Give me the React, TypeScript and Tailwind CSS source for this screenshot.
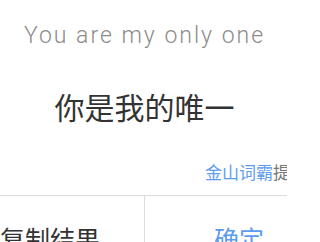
const App = () => (
  <div className="w-[287px] h-[242px] overflow-hidden bg-white font-['Noto_Sans_CJK_SC',sans-serif]">
    <div className="w-[377px] ml-[-44px] flex flex-col">
      <p className="pt-[22px] text-center text-[23px] leading-[28px] tracking-[2px] font-light text-[#8c8c8c] font-['Roboto','Liberation_Sans',sans-serif]">
        You are my only one
      </p>
      <p className="mt-[36px] text-center text-[30px] leading-[40px] text-[#333]">
        你是我的唯一
      </p>
      <div className="mt-[34px] pr-[26px] text-right text-[17px] leading-[24px]">
        <span className="text-[#5b9bf0]">金山词霸</span>
        <span className="text-[#777]">提供</span>
      </div>
      <div className="mt-[11px] flex border-t border-[#dcdcdc]">
        <button className="flex-1 h-[86px] text-[25px] text-[#333] border-r border-[#dcdcdc]">
          复制结果
        </button>
        <button className="flex-1 h-[86px] text-[25px] text-[#5b9bf0]">确定</button>
      </div>
    </div>
  </div>
);

export default App;
